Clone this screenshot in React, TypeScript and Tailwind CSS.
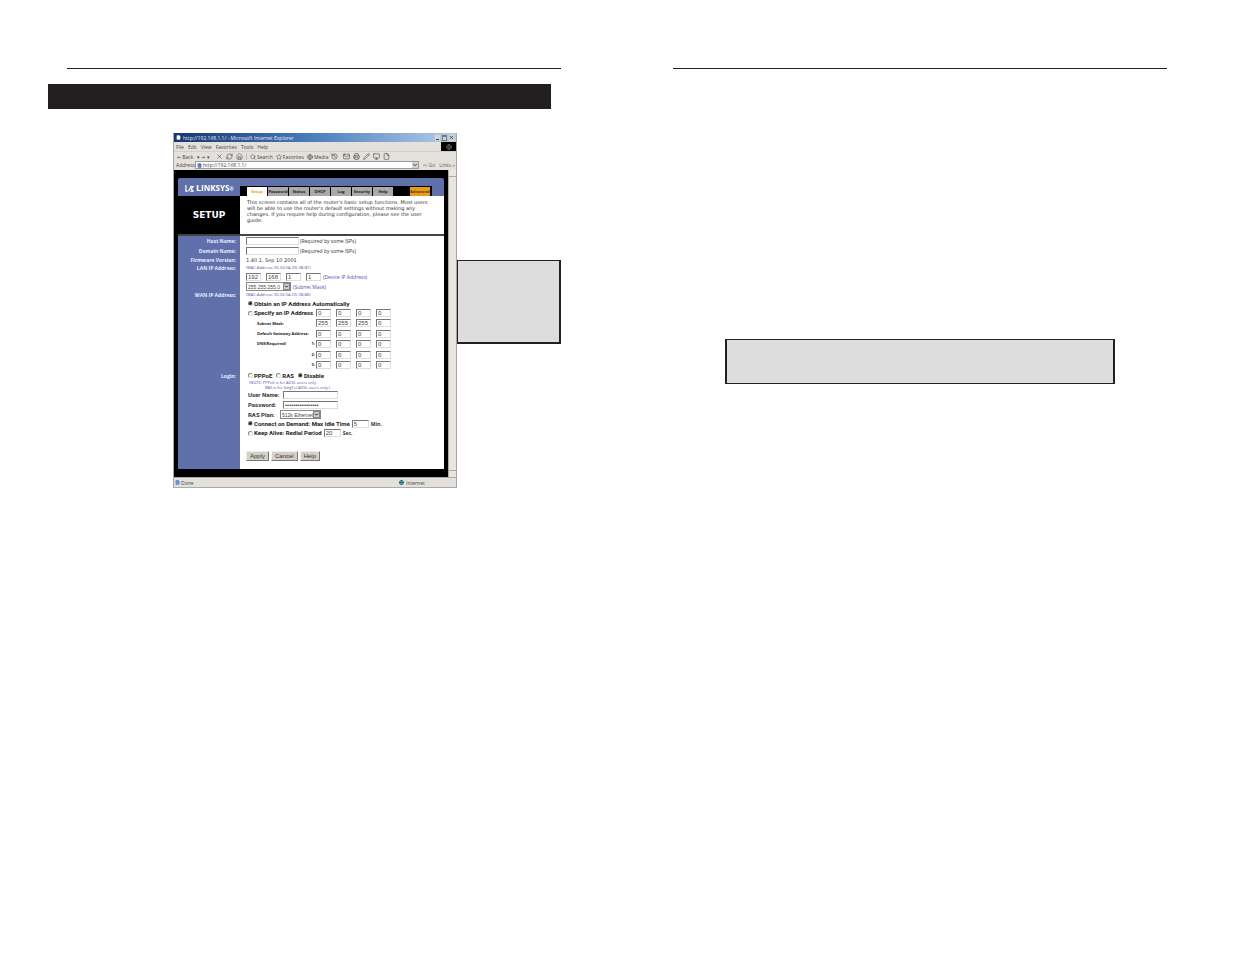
import type { ReactNode } from "react"
import { ChevronDown, File, Globe, History, House, Mail, Monitor, Pencil, Printer, RefreshCw, Search, Star, X } from "lucide-react"
import { clsx } from "clsx"

const menus = ["File", "Edit", "View", "Favorites", "Tools", "Help"]

const tabs = ["Setup", "Password", "Status", "DHCP", "Log", "Security", "Help"]

const wanRows = [
  { name: "IP address", values: ["0", "0", "0", "0"] },
  { name: "Subnet mask", values: ["255", "255", "255", "0"] },
  { name: "Gateway", values: ["0", "0", "0", "0"] },
  { name: "DNS 1", values: ["0", "0", "0", "0"] },
  { name: "DNS 2", values: ["0", "0", "0", "0"] },
  { name: "DNS 3", values: ["0", "0", "0", "0"] },
]

function Field({ label, value = "", className, id }: { label?: string; value?: string; className?: string; id?: string }) {
  return (
    <input
      id={id}
      aria-label={label}
      defaultValue={value}
      className={clsx(
        "h-[8px] shrink-0 border-t border-l border-t-[#777] border-l-[#777] border-r border-b border-r-[#ddd] border-b-[#ddd] bg-white px-px font-['Liberation_Sans'] text-[6px] leading-[6px] font-normal text-[#444]",
        className
      )}
    />
  )
}

function Octets({ name, values }: { name: string; values: string[] }) {
  return (
    <div className="flex gap-[5px]">
      {values.map((value, i) => (
        <Field key={i} label={`${name} octet ${i + 1}`} value={value} className="w-[15px]" />
      ))}
    </div>
  )
}

function Radio({ name, label, checked }: { name: string; label: string; checked?: boolean }) {
  return (
    <label className="flex items-center gap-px font-[Roboto] text-[6px] font-bold text-[#222]">
      <input
        type="radio"
        name={name}
        defaultChecked={checked}
        className="size-[5px] appearance-none rounded-full border border-t-[#888] border-l-[#888] border-r-[#ddd] border-b-[#ddd] bg-white checked:bg-[#222]"
      />
      {label}
    </label>
  )
}

function Dropdown({ label, value, className }: { label: string; value: string; className?: string }) {
  return (
    <div className={clsx("relative h-[9px] shrink-0", className)}>
      <select
        aria-label={label}
        className="block h-full w-full appearance-none border border-[#888] bg-white px-px font-['Liberation_Sans'] text-[5px] leading-[6px] text-[#444]"
      >
        <option>{value}</option>
      </select>
      <span className="pointer-events-none absolute top-px right-px flex size-[7px] items-center justify-center border border-[#888] bg-[#d4d0c8]">
        <ChevronDown className="size-[5px] text-black" strokeWidth={4} />
      </span>
    </div>
  )
}

function Row({ label, htmlFor, height, children }: { label?: string; htmlFor?: string; height: string; children?: ReactNode }) {
  return (
    <div className={clsx("flex", height)}>
      <div className="flex w-[62px] shrink-0 items-center justify-end bg-[#6070aa] pr-1 font-bold text-[#e6eaff]">
        {label && (htmlFor ? <label htmlFor={htmlFor}>{label}</label> : <span>{label}</span>)}
      </div>
      <div className="flex flex-1 items-center pl-[6px]">{children}</div>
    </div>
  )
}

function WanRow({ index, children }: { index: number; children: ReactNode }) {
  return (
    <>
      <div className="w-[70px] shrink-0 pr-px font-bold text-[#222]">{children}</div>
      <Octets {...wanRows[index]} />
    </>
  )
}

function BrowserChrome() {
  return (
    <div className="bg-[#e4e1dc] text-[5px] leading-[6px] whitespace-nowrap text-[#444]">
      <div className="flex h-[9px] items-center gap-[2px] bg-linear-to-r from-[#18356f] via-[#4c7fbd] to-[#b5cde9] pr-[2px] pl-[2px] text-[#e5edff]">
        <File className="size-[5px] fill-white" />
        <span className="flex-1">http://192.168.1.1/ - Microsoft Internet Explorer</span>
        <button aria-label="Minimize" className="flex h-[6px] w-[5px] items-end bg-[#d8d5cf] p-px">
          <span className="h-px w-full bg-[#444]" />
        </button>
        <button aria-label="Maximize" className="h-[6px] w-[5px] border border-t-2 border-[#777] bg-[#d8d5cf]" />
        <button aria-label="Close" className="flex h-[6px] w-[5px] items-center bg-[#d8d5cf] text-[#333]">
          <X className="size-[5px]" strokeWidth={4} />
        </button>
      </div>
      <div className="flex h-[9px] items-center justify-between pl-[2px]">
        <nav className="flex gap-1">
          {menus.map((menu) => (
            <button key={menu}>{menu}</button>
          ))}
        </nav>
        <div className="flex h-[9px] w-[15px] items-center justify-center bg-black text-[#888]">
          <Globe className="size-[6px]" />
        </div>
      </div>
      <div className="flex h-[10px] items-center gap-[3px] border-t border-[#d2cfca] pl-[3px]">
        <button className="w-[17px] text-left">⇐ Back</button>
        <span className="w-[16px]">▾ ⇒ ▾</span>
        <X className="size-[7px]" />
        <RefreshCw className="size-[7px]" />
        <House className="size-[7px]" />
        <span className="h-[7px] w-px bg-[#bbb]" />
        <button className="flex items-center gap-px"><Search className="size-[6px]" />Search</button>
        <button className="flex items-center gap-px"><Star className="size-[6px]" />Favorites</button>
        <button className="flex items-center gap-px"><Globe className="size-[6px]" />Media</button>
        <History className="size-[7px]" />
        <Mail className="ml-[2px] size-[7px]" />
        <Printer className="size-[7px]" />
        <Pencil className="size-[7px]" />
        <Monitor className="size-[7px]" />
        <File className="size-[7px]" />
      </div>
      <div className="flex h-[9px] items-center gap-px pr-px pb-px pl-[2px]">
        <label htmlFor="address" className="w-[18px] shrink-0">Address</label>
        <div className="flex h-[8px] flex-1 items-center border border-[#999] bg-white">
          <File className="ml-px size-[5px] fill-[#6787be] text-[#365a9f]" />
          <input id="address" defaultValue="http://192.168.1.1/" className="h-[6px] min-w-0 flex-1 px-px text-[5px] leading-[6px]" />
          <ChevronDown className="size-[6px] bg-[#d4d0c8]" strokeWidth={4} />
        </div>
        <button className="ml-[3px] text-[#666]">⇨ Go</button>
        <button className="ml-[3px] text-[#666]">Links »</button>
      </div>
    </div>
  )
}

function SetupHeader() {
  return (
    <header>
      <div className="flex h-[18px] items-end rounded-t-[2px] bg-[#6070aa]">
        <div className="flex h-full w-[62px] items-center gap-[2px] pt-[3px] pl-[7px] text-[9px] leading-[10px] font-bold text-white">
          <svg viewBox="0 0 10 10" className="size-[9px]" fill="none" stroke="white" strokeWidth="1.3">
            <path d="M1 1v7h2M4 8l3-6M6 3h3L7 5.5 9 8H6" />
          </svg>
          <span>L<span className="text-[8px]">INKSYS</span><span className="text-[5px]">®</span></span>
        </div>
        <nav className="flex h-[10px] bg-black pt-px pr-[2px] pl-[7px] text-[4px] leading-[6px] font-bold">
          {tabs.map((tab) => (
            <a
              key={tab}
              href="#setup"
              className={clsx(
                "mr-px flex w-[20px] items-center justify-center",
                tab === "Setup" ? "bg-white text-[#ef9b27]" : "bg-[#aaa] text-[#222]"
              )}
            >
              {tab}
            </a>
          ))}
          <a href="#advanced" className="ml-4 flex w-[20px] items-center justify-center bg-[#e99b1c] text-[#5b3900]">
            Advanced
          </a>
        </nav>
      </div>
      <div className="flex h-[38px] bg-white">
        <h1 className="flex w-[62px] items-center justify-center bg-black font-['DejaVu_Sans'] text-[9px] leading-[10px] font-bold text-white">
          SETUP
        </h1>
        <p className="pt-[3px] pl-[7px] font-['DejaVu_Sans'] text-[5px] leading-[6px] whitespace-nowrap text-[#333]">
          This screen contains all of the router's basic setup functions. Most users<br />
          will be able to use the router's default settings without making any<br />
          changes. If you require help during configuration, please see the user<br />
          guide.
        </p>
      </div>
    </header>
  )
}

function SetupForm() {
  return (
    <form id="setup" className="border-t-2 border-[#444] bg-white text-[5px] leading-[6px] whitespace-nowrap text-[#333]">
      <Row label="Host Name:" htmlFor="host" height="h-[10px]">
        <Field id="host" className="w-[53px]" />
        <span className="pl-px">(Required by some ISPs)</span>
      </Row>
      <Row label="Domain Name:" htmlFor="domain" height="h-[10px]">
        <Field id="domain" className="w-[53px]" />
        <span className="pl-px">(Required by some ISPs)</span>
      </Row>
      <Row label="Firmware Version:" height="h-[8px]">
        <span className="font-['DejaVu_Sans']">1.40.1, Sep 10 2001</span>
      </Row>
      <Row label="LAN IP Address:" height="h-[8px]">
        <span className="text-[4px] text-[#5252a8]">(MAC Address: 00-04-5A-D0-3B-B7)</span>
      </Row>
      <Row height="h-[10px]">
        <Octets name="LAN IP" values={["192", "168", "1", "1"]} />
        <span className="pl-[2px] text-[#5252a8]">(Device IP Address)</span>
      </Row>
      <Row height="h-[9px]">
        <Dropdown label="Subnet mask" value="255.255.255.0" className="w-[45px]" />
        <span className="pl-[2px] text-[#5252a8]">(Subnet Mask)</span>
      </Row>
      <Row label="WAN IP Address:" height="h-[8px]">
        <span className="text-[4px] text-[#5252a8]">(MAC Address: 00-04-5A-D0-3B-B8)</span>
      </Row>
      <Row height="h-[9px]">
        <div className="pl-[2px]"><Radio name="wan" label="Obtain an IP Address Automatically" checked /></div>
      </Row>
      <Row height="h-[10px]">
        <WanRow index={0}><div className="pl-[2px]"><Radio name="wan" label="Specify an IP Address" /></div></WanRow>
      </Row>
      <Row height="h-[10px]">
        <WanRow index={1}><span className="pl-[11px] text-[4px]">Subnet Mask:</span></WanRow>
      </Row>
      <Row height="h-[11px]">
        <WanRow index={2}><span className="pl-[11px] text-[4px]">Default Gateway Address:</span></WanRow>
      </Row>
      <Row height="h-[10px]">
        <WanRow index={3}>
          <div className="flex justify-between pl-[11px] text-[4px]"><span>DNS(Required)</span><span>1:</span></div>
        </WanRow>
      </Row>
      <Row height="h-[11px]">
        <WanRow index={4}><div className="text-right text-[4px]">2:</div></WanRow>
      </Row>
      <Row height="h-[10px]">
        <WanRow index={5}><div className="text-right text-[4px]">3:</div></WanRow>
      </Row>
      <Row label="Login:" height="h-[11px]">
        <div className="flex gap-1 pl-[2px]">
          <Radio name="login" label="PPPoE" />
          <Radio name="login" label="RAS" />
          <Radio name="login" label="Disable" checked />
        </div>
      </Row>
      <Row height="h-[4px]">
        <span className="pl-[3px] text-[4px] leading-[4px] text-[#5252a8]">(NOTE: PPPoE is for ADSL users only.</span>
      </Row>
      <Row height="h-[5px]">
        <span className="pl-[19px] text-[4px] leading-[4px] text-[#5252a8]">RAS is for SingTel ADSL users only.)</span>
      </Row>
      <Row height="h-[10px]">
        <label htmlFor="user" className="w-[37px] pl-[2px] font-[Roboto] text-[6px] font-bold">User Name:</label>
        <Field id="user" className="w-[55px]" />
      </Row>
      <Row height="h-[10px]">
        <label htmlFor="password" className="w-[37px] pl-[2px] font-[Roboto] text-[6px] font-bold">Password:</label>
        <Field id="password" value="••••••••••••••••" className="w-[55px]" />
      </Row>
      <Row height="h-[9px]">
        <span className="w-[34px] pl-[2px] font-[Roboto] text-[6px] font-bold">RAS Plan:</span>
        <Dropdown label="RAS plan" value="512k Ethernet" className="w-[41px]" />
      </Row>
      <Row height="h-[9px]">
        <div className="flex items-center gap-[2px] pl-[2px] font-bold">
          <Radio name="connect" label="Connect on Demand: Max Idle Time" checked />
          <Field label="Max idle time" value="5" className="w-[17px]" />
          Min.
        </div>
      </Row>
      <Row height="h-[10px]">
        <div className="flex items-center gap-[2px] pl-[2px] font-bold">
          <Radio name="connect" label="Keep Alive: Redial Period" />
          <Field label="Redial period" value="20" className="w-[17px]" />
          Sec.
        </div>
      </Row>
      <Row height="h-[31px]">
        <div className="flex gap-[2px] pt-1">
          {["Apply", "Cancel", "Help"].map((text) => (
            <button
              key={text}
              type="button"
              className="h-[10px] border border-[#eee] border-r-[#777] border-b-[#777] bg-[#d4d0c8] px-[3px] font-['Liberation_Sans'] text-[6px] leading-[8px] text-[#333]"
            >
              {text}
            </button>
          ))}
        </div>
      </Row>
    </form>
  )
}

function BrowserWindow() {
  return (
    <div className="w-[284px] shrink-0 overflow-hidden border-r border-l border-[#aaa69f] bg-[#e4e1dc] font-['Open_Sans',sans-serif]">
      <BrowserChrome />
      <div className="flex">
        <div className="flex-1 bg-black px-1 pt-2 pb-2">
          <SetupHeader />
          <SetupForm />
        </div>
        <div className="flex w-[8px] flex-col justify-between border-l border-[#aaa] bg-[#e9e5e1] text-[#777]">
          <span className="h-[7px] border-b border-[#aaa]" />
          <span className="h-[7px] border-t border-[#aaa]" />
        </div>
      </div>
      <div className="flex h-[11px] items-center border-y border-[#aaa] text-[5px] leading-[6px] text-[#444]">
        <File className="mr-px ml-px size-[5px] fill-[#6c9bd2] text-[#3469aa]" />
        <span className="flex-1">Done</span>
        <Globe className="mr-[2px] size-[5px] text-[#176078]" strokeWidth={4} />
        <span className="w-[50px]">Internet</span>
      </div>
    </div>
  )
}

export default function App() {
  return (
    <main className="grid min-h-screen grid-cols-2 bg-white">
      <section className="pt-[68px] pr-[57px] pl-12">
        <hr className="ml-[19px] border-[#231f20]" />
        <div className="mt-[15px] mr-[10px] h-[25px] bg-[#231f20]" />
        <div className="mt-6 flex items-start pl-[125px]">
          <BrowserWindow />
          <aside className="mt-[127px] h-[84px] flex-1 border border-r-2 border-b-2 border-[#231f20] bg-[#dddddd]" />
        </div>
      </section>
      <section className="pt-[68px] pr-[68px] pl-[55px]">
        <hr className="border-[#231f20]" />
        <aside className="mt-[270px] mr-[52px] ml-[52px] h-[45px] border border-r-2 border-l-2 border-[#231f20] bg-[#dddddd]" />
      </section>
    </main>
  )
}
